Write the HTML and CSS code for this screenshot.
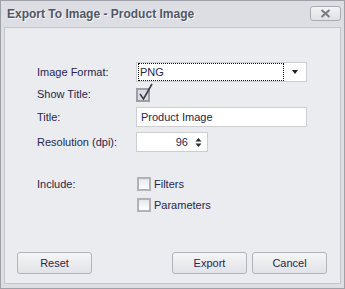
FILE: index.html
```html
<!DOCTYPE html>
<html lang="en">

<head>
    <meta charset="UTF-8">
    <title>Export To Image</title>
    <link rel="stylesheet" href="styles.css">
</head>

<body>

    <div class="window">
        <div class="titlebar">
            <span class="title">Export To Image - Product Image</span>
            <div class="close">
                <svg width="11" height="9" viewBox="0 0 11 9">
                    <path d="M1.5 1 L9.5 8 M9.5 1 L1.5 8" stroke="#7a7e88" stroke-width="2.2" fill="none"/>
                </svg>
            </div>
        </div>

        <div class="content">
            <div class="form">
                <div class="row row-field">
                    <label>Image Format:</label>
                    <div class="combo">
                        <span class="combo-text">PNG</span>
                        <span class="combo-arrow"></span>
                    </div>
                </div>
                <div class="row row-check">
                    <label>Show Title:</label>
                    <div class="checkbox checked">
                        <svg width="16" height="18" viewBox="0 0 16 18">
                            <path d="M2 11 L5.5 16 L14 1" stroke="#3c3f48" stroke-width="1.6" fill="none"/>
                        </svg>
                    </div>
                </div>
                <div class="row row-field">
                    <label>Title:</label>
                    <div class="textbox">Product Image</div>
                </div>
                <div class="row row-field">
                    <label>Resolution (dpi):</label>
                    <div class="spin">
                        <span class="spin-value">96</span>
                        <span class="spin-buttons">
                            <svg width="7" height="13" viewBox="0 0 7 13">
                                <path d="M3.5 2 L6.5 5.5 L0.5 5.5 Z M0.5 7.5 L6.5 7.5 L3.5 11 Z" fill="#2a2d38"/>
                            </svg>
                        </span>
                    </div>
                </div>

                <div class="row row-include">
                    <label>Include:</label>
                    <div class="check-item">
                        <span class="checkbox"></span>
                        <span>Filters</span>
                    </div>
                </div>
                <div class="row row-sub">
                    <label></label>
                    <div class="check-item">
                        <span class="checkbox"></span>
                        <span>Parameters</span>
                    </div>
                </div>
            </div>

            <div class="buttons">
                <button class="btn">Reset</button>
                <div class="btn-group">
                    <button class="btn">Export</button>
                    <button class="btn">Cancel</button>
                </div>
            </div>
        </div>
    </div>

</body>

</html>
```

FILE: styles.css
```css
:root {
    --text-color: #26264e;
    --panel-color: #ebecf0;
    --frame-color: #dddee3;
    --border-color: #c4c5cb;
}

body {
    margin: 0;
    font-family: 'Liberation Sans', Arial, sans-serif;
    font-size: 11px;
    color: var(--text-color);
}

.window {
    width: 345px;
    height: 289px;
    box-sizing: border-box;
    border: 1px solid #9fa1a8;
    background-color: var(--frame-color);
    padding: 0 3px 4px 3px;
    display: flex;
    flex-direction: column;
}

.titlebar {
    height: 26px;
    display: flex;
    align-items: center;
    justify-content: space-between;
    padding-left: 3px;
}

.title {
    font-weight: bold;
    font-size: 12px;
    color: #505768;
    text-shadow: 1px 1px 0 rgba(255, 255, 255, 0.8);
}

.close {
    width: 29px;
    height: 13px;
    border: 1px solid #a9abb2;
    border-radius: 3px;
    background: linear-gradient(#f3f3f5, #e0e1e5);
    display: flex;
    align-items: center;
    justify-content: center;
    margin-bottom: 2px;
}

.content {
    flex: 1;
    border: 1px solid var(--border-color);
    background-color: var(--panel-color);
    display: flex;
    flex-direction: column;
    justify-content: space-between;
    padding: 34px 13px 9px 12px;
}

.form {
    display: flex;
    flex-direction: column;
    padding-left: 20px;
}

.row {
    display: flex;
    align-items: center;
}

.row label {
    width: 99px;
    flex-shrink: 0;
}

.row-field {
    height: 20px;
}

.row-check {
    height: 16px;
    margin: 4px 0 5px;
}

.row-field + .row-field {
    margin-top: 5px;
}

.row-include {
    height: 15px;
    margin-top: 24px;
}

.row-sub {
    height: 15px;
    margin-top: 6px;
}

.combo,
.textbox,
.spin {
    box-sizing: border-box;
    height: 20px;
    background-color: white;
    border: 1px solid #cdcdd2;
    display: flex;
    align-items: center;
}

.combo {
    width: 171px;
    padding: 1px;
}

.combo-text {
    flex: 1;
    height: 16px;
    line-height: 16px;
    border: 1px dotted #111;
    padding-left: 1px;
}

.combo-arrow {
    width: 0;
    height: 0;
    border-left: 3.5px solid transparent;
    border-right: 3.5px solid transparent;
    border-top: 4px solid #1e2028;
    margin: 0 7px 0 8px;
}

.textbox {
    width: 171px;
    padding-left: 4px;
}

.spin {
    width: 72px;
    justify-content: flex-end;
    padding-right: 5px;
}

.spin-value {
    margin-right: 7px;
}

.spin-buttons {
    display: flex;
}

.checkbox {
    box-sizing: border-box;
    width: 14px;
    height: 14px;
    border: 2px solid #b0b1b9;
    background: linear-gradient(#e7e8ec, #ffffff);
    display: inline-block;
}

.checkbox.checked {
    position: relative;
    background: #dcdde2;
    border-color: #9c9ea6;
    margin-top: 2px;
}

.checkbox.checked svg {
    position: absolute;
    left: 0;
    top: -7px;
}

.check-item {
    display: flex;
    align-items: center;
    gap: 3px;
    margin-left: 1px;
}

.buttons {
    display: flex;
    justify-content: space-between;
}

.btn-group {
    display: flex;
    gap: 5px;
}

.btn {
    width: 75px;
    height: 22px;
    border: 1px solid #b2b4bb;
    border-radius: 3px;
    background: linear-gradient(#f5f5f7, #e2e3e7);
    font-family: 'Liberation Sans', Arial, sans-serif;
    font-size: 11px;
    color: var(--text-color);
    padding: 0;
}
```
